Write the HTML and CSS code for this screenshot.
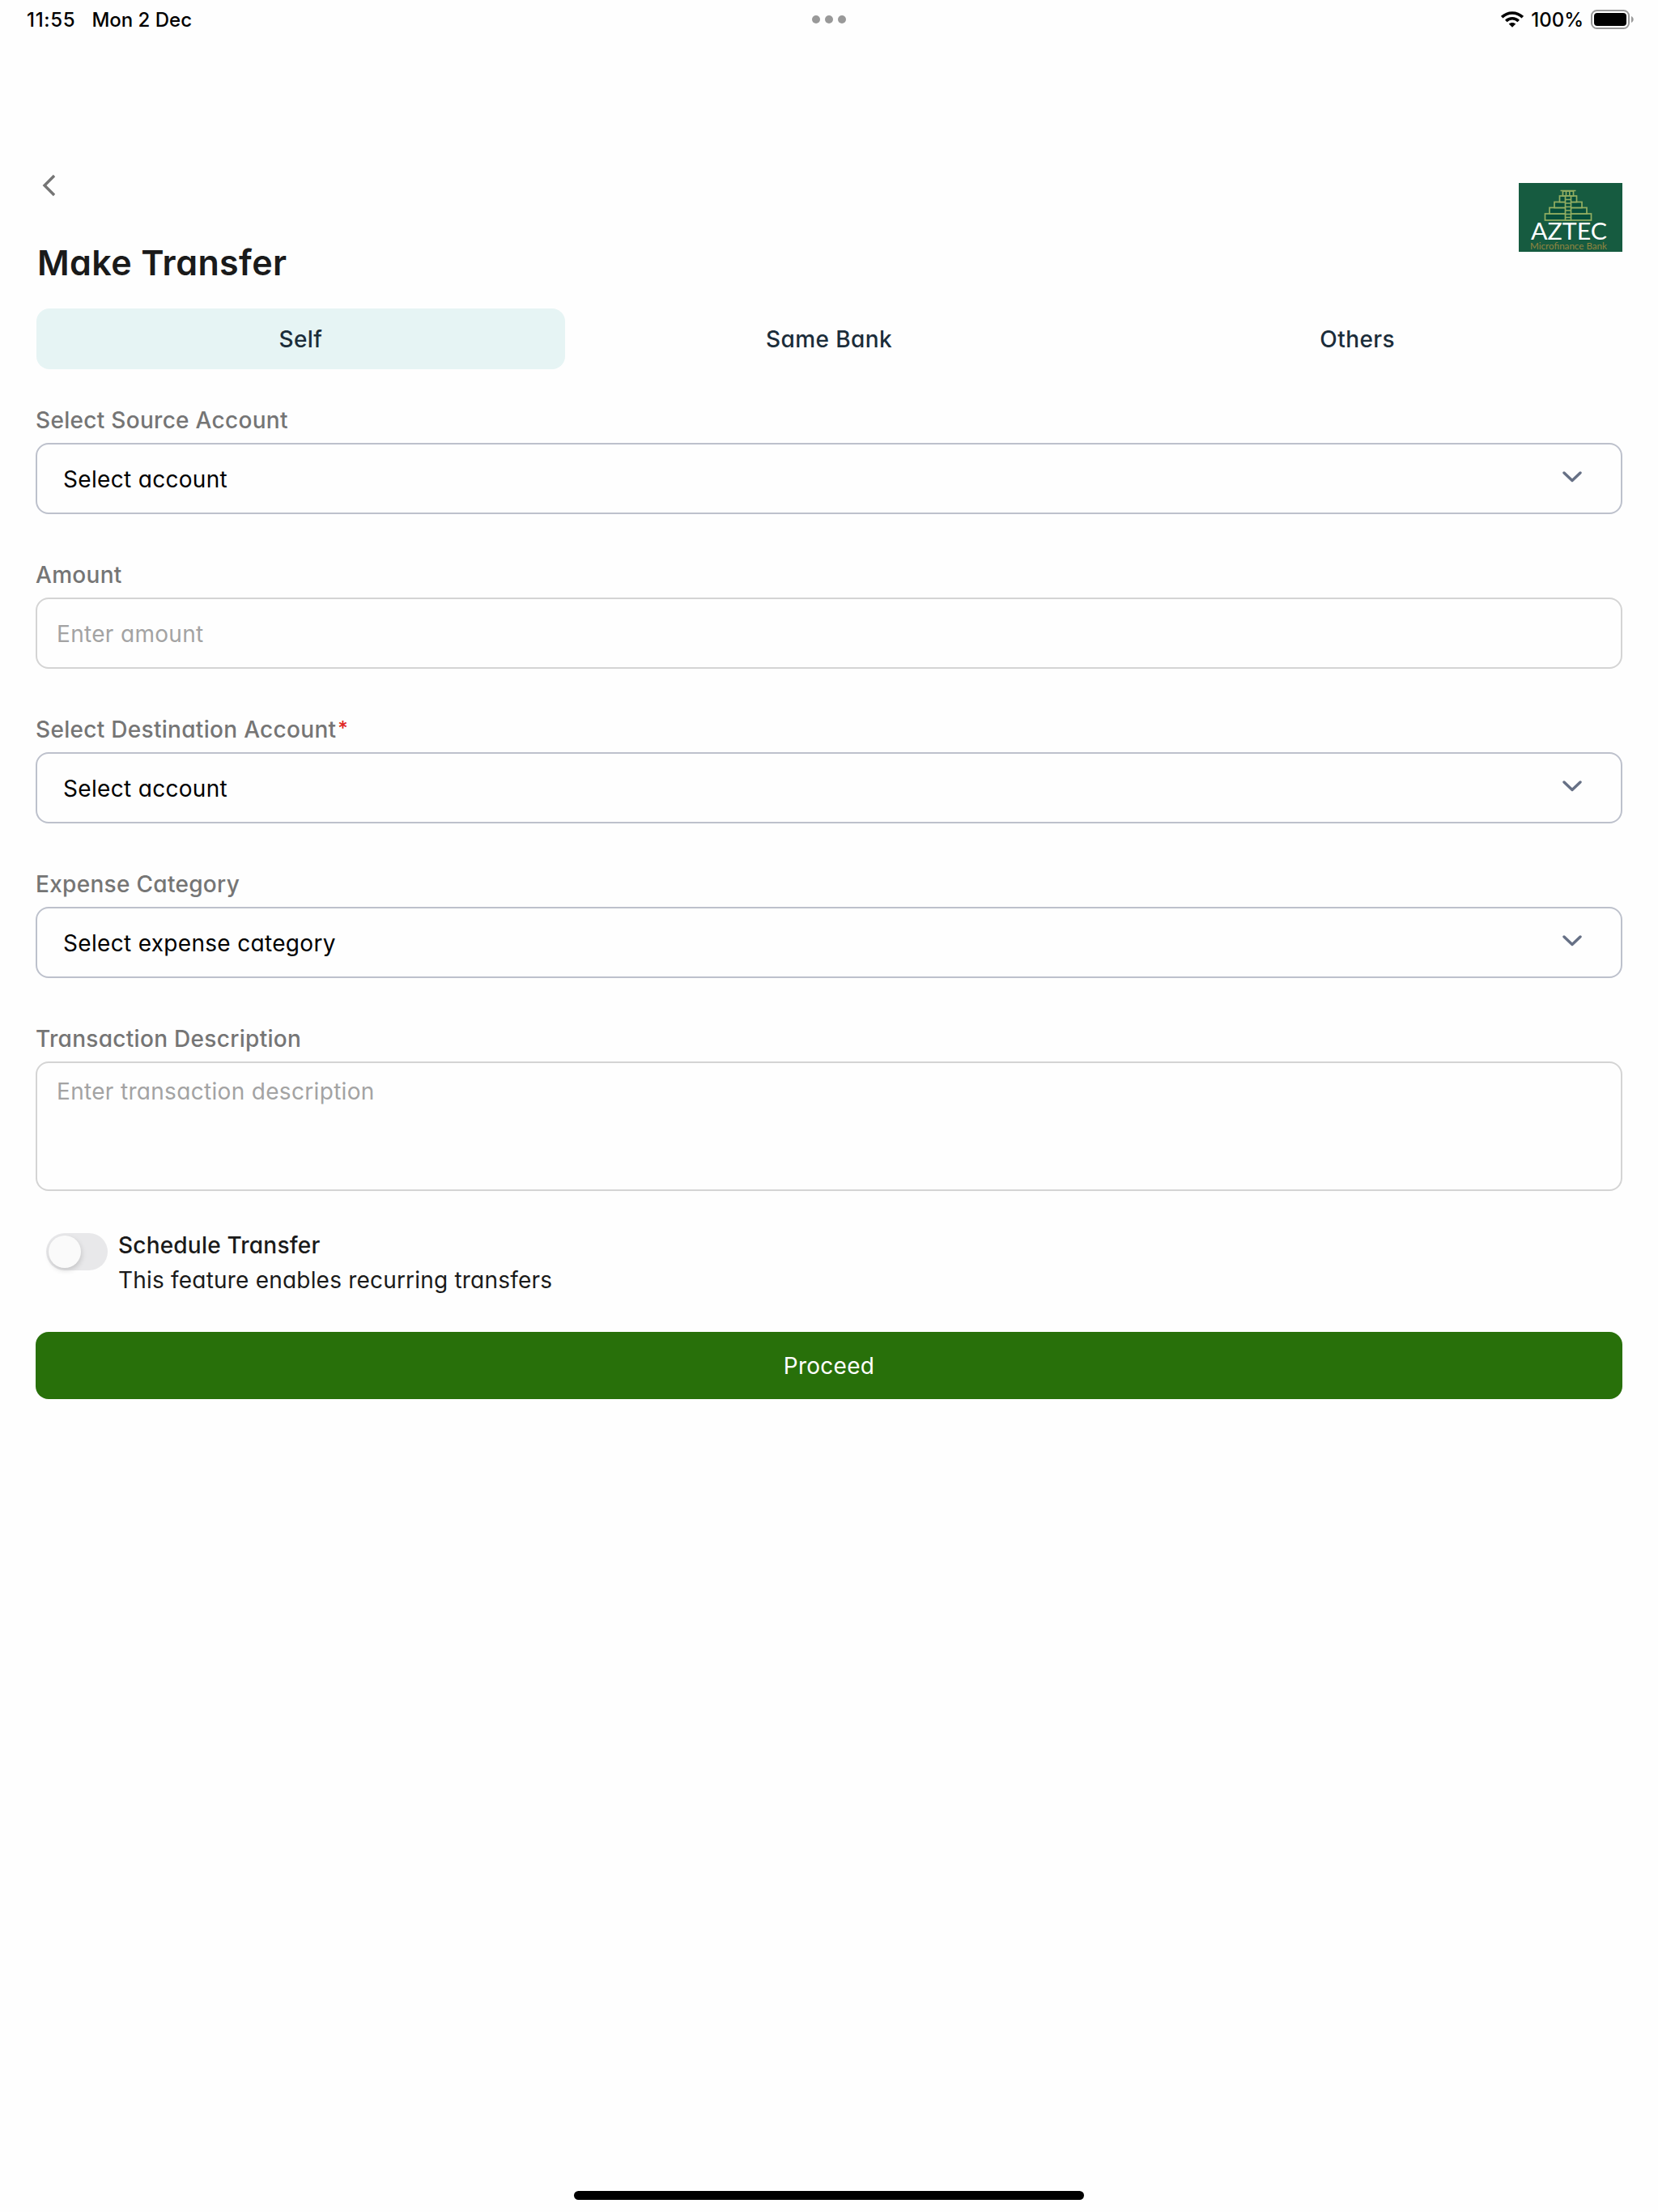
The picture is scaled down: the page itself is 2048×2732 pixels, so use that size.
FILE: index.html
```html
<!DOCTYPE html>
<html lang="en">
<head>
    <meta charset="UTF-8">
    <meta name="viewport" content="width=device-width, initial-scale=1.0">
    <title>Make Transfer</title>
    <link rel="stylesheet" href="styles.css">
</head>
<body>
    <div class="screen">
        <div class="status-bar">
            <div class="status-left">
                <span class="time">11:55</span>
                <span class="date">Mon 2 Dec</span>
            </div>
            <div class="dots"><i></i><i></i><i></i></div>
            <div class="status-right">
                <svg class="wifi" width="28" height="20" viewBox="0 0 28 20">
                    <path d="M1.2 7.2C8.5 0.2 19.5 0.2 26.8 7.2M6.3 12C10.6 7.7 17.4 7.7 21.7 12" fill="none" stroke="#000" stroke-width="3.6"/>
                    <path d="M14 19.8L9.7 15.6C12 13.4 16 13.4 18.3 15.6Z"/>
                </svg>
                <span class="percent">100%</span>
                <svg class="battery" width="54" height="24" viewBox="0 0 54 24">
                    <rect x="1" y="1" width="46" height="22" rx="6.5" fill="none" stroke="#999" stroke-width="2"/>
                    <rect x="4" y="4" width="40" height="16" rx="4"/>
                    <path d="M50 8C53.6 9.4 53.6 14.6 50 16Z" fill="#999"/>
                </svg>
            </div>
        </div>

        <header class="header">
            <div class="heading">
                <button class="back" aria-label="Back">
                    <svg width="16" height="28" viewBox="0 0 16 28">
                        <path d="M15 2L3 14L15 26" fill="none" stroke="#757575" stroke-width="3.4"/>
                    </svg>
                </button>
                <h1>Make Transfer</h1>
            </div>
            <svg class="logo" width="128" height="85" viewBox="0 0 128 85">
                <rect width="128" height="85" fill="#165b40"/>
                <g fill="#074f3b" stroke="#93ae62" stroke-width="1.7">
                    <rect x="32.5" y="38" width="57" height="8"/>
                    <rect x="38" y="30.5" width="46" height="7.5"/>
                    <rect x="44" y="23.5" width="34" height="7"/>
                    <rect x="50.5" y="16" width="21" height="7.5"/>
                    <rect x="54.5" y="10" width="13" height="6"/>
                    <path d="M51.5 9.5H70.5M58.5 10V16M62.8 10V16"/>
                    <rect x="57.5" y="16" width="7" height="30"/>
                    <path d="M57.5 20.5H64.5M57.5 25H64.5M57.5 29.5H64.5M57.5 34H64.5M57.5 38.5H64.5M57.5 42.5H64.5" stroke-width="1.3"/>
                </g>
                <text class="logo-name" x="15" y="70" textLength="94" lengthAdjust="spacingAndGlyphs">AZTEC</text>
                <text class="logo-sub" x="14" y="82" textLength="95" lengthAdjust="spacingAndGlyphs">Microfinance Bank</text>
            </svg>
        </header>

        <nav class="tabs">
            <button class="tab active">Self</button>
            <button class="tab">Same Bank</button>
            <button class="tab">Others</button>
        </nav>

        <main class="form">
            <div class="field">
                <label>Select Source Account</label>
                <div class="select">
                    <span>Select account</span>
                    <svg width="24" height="14" viewBox="0 0 24 14"><path d="M2 2L12 11.5L22 2"/></svg>
                </div>
            </div>
            <div class="field">
                <label>Amount</label>
                <div class="input">Enter amount</div>
            </div>
            <div class="field">
                <label>Select Destination Account<span class="required">*</span></label>
                <div class="select">
                    <span>Select account</span>
                    <svg width="24" height="14" viewBox="0 0 24 14"><path d="M2 2L12 11.5L22 2"/></svg>
                </div>
            </div>
            <div class="field">
                <label>Expense Category</label>
                <div class="select">
                    <span>Select expense category</span>
                    <svg width="24" height="14" viewBox="0 0 24 14"><path d="M2 2L12 11.5L22 2"/></svg>
                </div>
            </div>
            <div class="field">
                <label>Transaction Description</label>
                <div class="input textarea">Enter transaction description</div>
            </div>

            <div class="schedule">
                <div class="toggle"><div class="knob"></div></div>
                <div class="schedule-text">
                    <strong>Schedule Transfer</strong>
                    <p>This feature enables recurring transfers</p>
                </div>
            </div>

            <button class="proceed">Proceed</button>
        </main>

        <div class="home-indicator"></div>
    </div>
</body>
</html>
```
FILE: styles.css
```css
* {
    box-sizing: border-box;
}

body {
    margin: 0;
    background: #fefefe;
    color: #1a1a1a;
    font-family: Inter, "Liberation Sans", sans-serif;
    font-size: 28px;
}

button {
    padding: 0;
    border: none;
    background: none;
    font: inherit;
    color: inherit;
}

.screen {
    display: flex;
    flex-direction: column;
    height: 2732px;
}

/* status bar */
.status-bar {
    display: grid;
    grid-template-columns: 1fr auto 1fr;
    align-items: center;
    height: 48px;
    padding: 0 29px;
    color: #000;
    font-size: 24px;
    font-weight: 500;
}

.status-left {
    display: flex;
    gap: 20px;
    padding-left: 4px;
}

.time {
    letter-spacing: 0.7px;
}

.dots {
    display: flex;
    gap: 6px;
}

.dots i {
    width: 10px;
    height: 10px;
    border-radius: 50%;
    background: #999;
}

.status-right {
    display: flex;
    justify-content: flex-end;
    align-items: center;
    gap: 9px;
}

/* header */
.header {
    display: flex;
    justify-content: space-between;
    align-items: flex-start;
    padding: 167px 44px 0 46px;
}

.back {
    display: block;
    height: 28px;
    margin-left: 6px;
}

.back svg {
    display: block;
}

h1 {
    margin: 54px 0 0;
    font-size: 43px;
    font-weight: 600;
    line-height: 54px;
    letter-spacing: 0.4px;
    font-feature-settings: "cv11";
}

.logo {
    margin-top: 11px;
}

.logo-name {
    fill: #fff;
    font-family: Lato, sans-serif;
    font-size: 28px;
}

.logo-sub {
    fill: #93853f;
    font-family: Lato, sans-serif;
    font-size: 11px;
}

/* tabs */
.tabs {
    display: flex;
    padding: 30px 45px 0;
    font-feature-settings: "cv11";
}

.tab {
    flex: 1;
    height: 75px;
    padding-top: 1px;
    border-radius: 16px;
    color: #1b2d3a;
    font-weight: 500;
    letter-spacing: 0.4px;
}

.tab.active {
    background: #e6f4f4;
}

/* form */
.form {
    display: flex;
    flex-direction: column;
    padding: 45px 44px 0;
    font-feature-settings: "cv11";
}

.field {
    margin-bottom: 57px;
}

label {
    display: block;
    margin-bottom: 10px;
    color: #757575;
    font-weight: 500;
    line-height: 36px;
    letter-spacing: 0.3px;
}

.required {
    margin-left: 2px;
    color: #e02424;
    font-size: 24px;
    line-height: 0;
    vertical-align: 3px;
}

.select,
.input {
    display: flex;
    align-items: center;
    height: 88px;
    padding-top: 2px;
    border: 2px solid #bdc1cc;
    border-radius: 16px;
    letter-spacing: 0.32px;
}

.select {
    justify-content: space-between;
    padding-left: 32px;
    padding-right: 48px;
    color: #000;
}

.select svg {
    margin-top: -6px;
    fill: none;
    stroke: #667085;
    stroke-width: 3.4;
    stroke-linecap: round;
    stroke-linejoin: round;
}

.input {
    padding-left: 24px;
    padding-right: 24px;
    border-color: #d4d4d4;
    color: #a3a3a3;
}

.textarea {
    align-items: flex-start;
    height: 160px;
    padding-top: 18px;
}

/* schedule toggle */
.schedule {
    display: flex;
    gap: 13px;
    margin-top: -12px;
    padding-left: 13px;
    line-height: 43px;
}

.toggle {
    width: 76px;
    height: 46px;
    margin-top: 7px;
    padding: 3px;
    border-radius: 23px;
    background: #e8e8ea;
}

.knob {
    width: 40px;
    height: 40px;
    border-radius: 50%;
    background: #fafafa;
    box-shadow: 1px 3px 6px rgba(0, 0, 0, 0.15);
}

.schedule-text {
    padding-top: 1px;
    letter-spacing: 0.2px;
}

.schedule-text strong {
    display: block;
    font-weight: 500;
}

.schedule-text p {
    margin: 0;
}

.proceed {
    height: 83px;
    margin-top: 42px;
    border-radius: 16px;
    background: #28700a;
    color: #fff;
    letter-spacing: 0.25px;
}

.home-indicator {
    width: 630px;
    height: 11px;
    margin: auto auto 15px;
    border-radius: 6px;
    background: #000;
}
```
